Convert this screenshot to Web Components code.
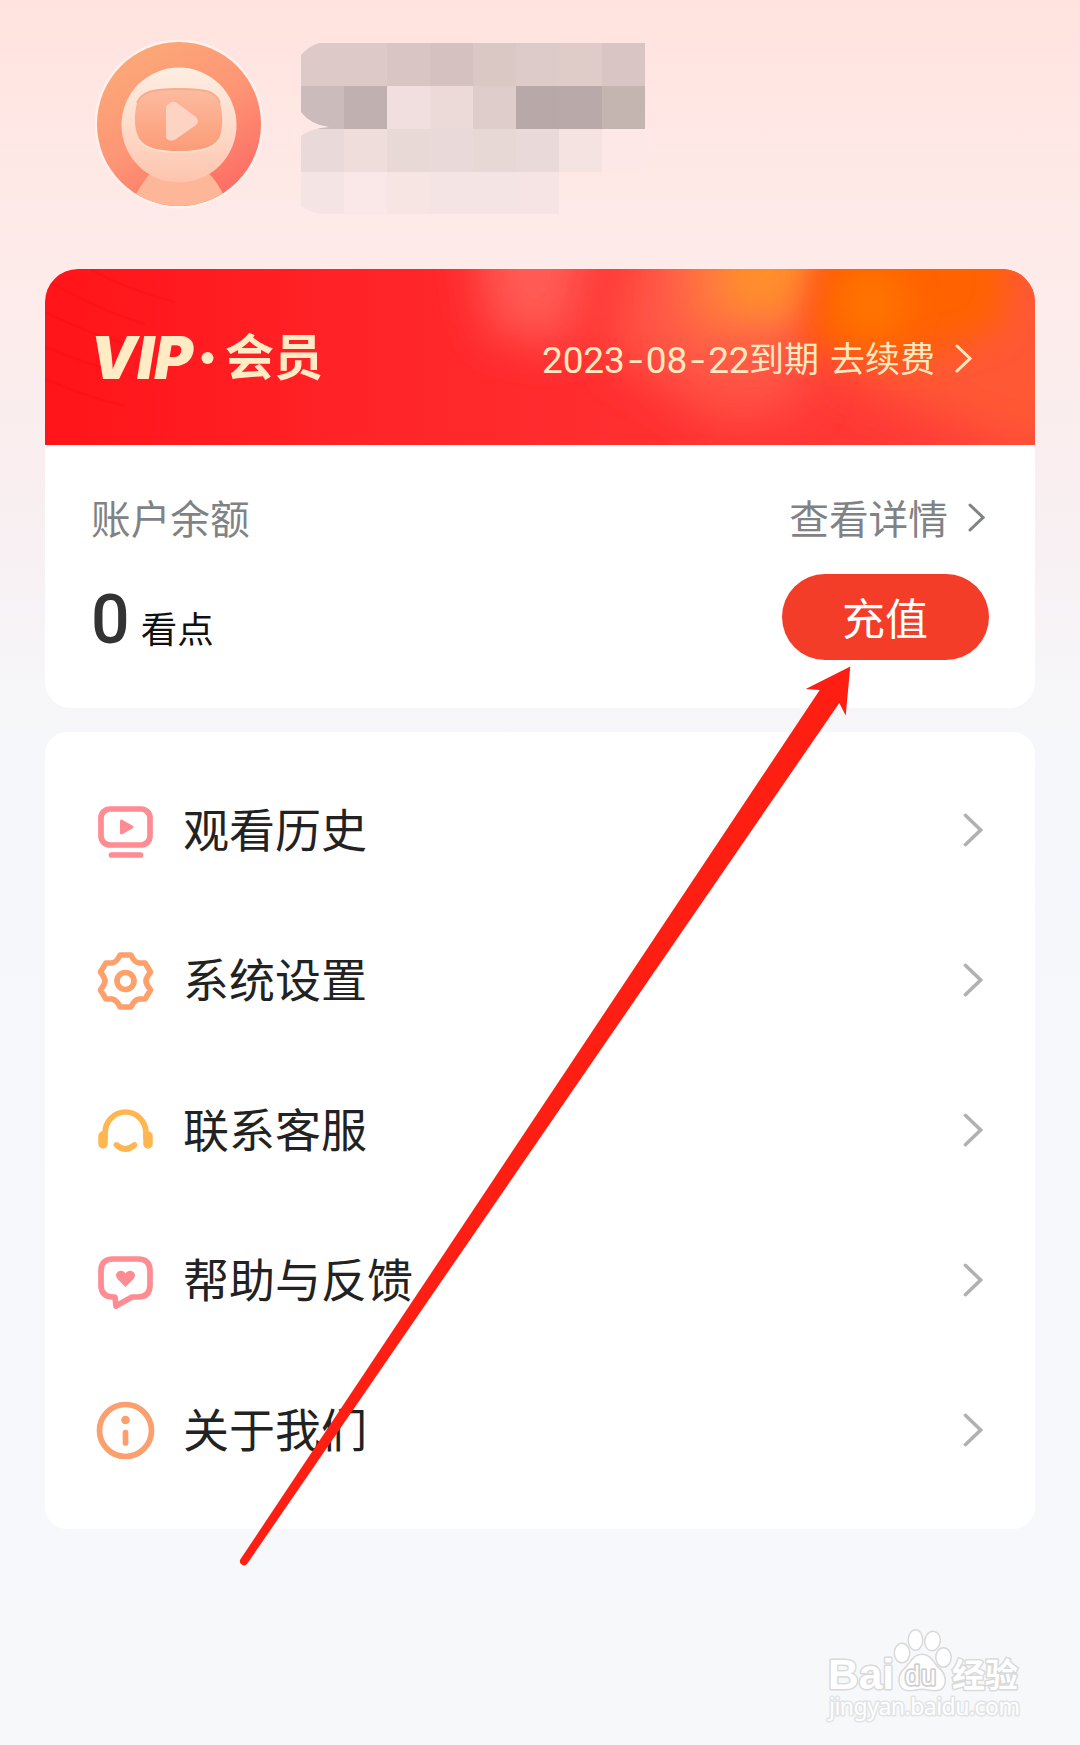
<!DOCTYPE html>
<html lang="zh-CN">
<head>
<meta charset="UTF-8">
<title>我的</title>
<style>
  body {
    margin: 0;
    font-family: Roboto, "Noto Sans CJK SC", sans-serif;
    color: #222;
  }
</style>
</head>
<body>
<account-page>
  <profile-header></profile-header>
  <account-card>
    <vip-banner date="2023-08-22" action="去续费"></vip-banner>
    <balance-panel amount="0"></balance-panel>
  </account-card>
  <menu-list>
    <menu-item icon="history">观看历史</menu-item>
    <menu-item icon="settings">系统设置</menu-item>
    <menu-item icon="service">联系客服</menu-item>
    <menu-item icon="feedback">帮助与反馈</menu-item>
    <menu-item icon="about">关于我们</menu-item>
  </menu-list>
  <pointer-arrow></pointer-arrow>
  <site-mark></site-mark>
</account-page>

<script>
class AccountPage extends HTMLElement {
  constructor() {
    super();
    this.attachShadow({ mode: 'open' });
    this.shadowRoot.innerHTML = `
    <style>
      :host {
        display: flex;
        flex-direction: column;
        position: relative;
        box-sizing: border-box;
        width: 1080px;
        height: 1745px;
        padding: 0 45px;
        overflow: hidden;
        background: linear-gradient(#ffe3df 0, #ffe6e3 90px, #fdebe9 260px, #f9eef0 480px, #f6f7fa 730px, #f7f8fa 100%);
      }
    </style>
    <slot></slot>
    `;
  }
}

class ProfileHeader extends HTMLElement {
  constructor() {
    super();
    this.attachShadow({ mode: 'open' });
    const cells = [
      '#dcc9c8', '#dcc9c8', '#d8c5c4', '#d4c1c0', '#dac8c5', '#ddcbca', '#dfccc9', '#d9c6c4',
      '#ccbbbb', '#c0b0b0', '#f1dede', '#ecdad9', '#dfcdcc', '#b8a8a8', '#b9aaa9', '#c5b5b1',
      '#ead9d9', '#eedddb', '#e8d8d6', '#ead9d9', '#e8d8d5', '#e9d9d8', '#f5e3e2', '#fde8e7',
      '#f5e4e4', '#fae7e7', '#f6e5e3', '#f4e4e3', '#f5e4e4', '#f6e4e4', 'transparent', 'transparent'
    ];
    this.shadowRoot.innerHTML = `
    <style>
      :host {
        display: flex;
        align-items: flex-start;
        padding: 39px 0 0 49px;
        box-sizing: border-box;
        height: 269px;
        gap: 37px;
      }

      .avatar {
        width: 170px;
        height: 170px;
        flex: none;
      }

      .mosaic {
        display: grid;
        grid-template-columns: repeat(8, 43px);
        grid-template-rows: 43px 43px 43px 42px;
        margin-top: 4px;
        clip-path: path('M0 12Q8 3 18 0H344V171H26Q10 171 0 163V93Q8 86 28 84Q10 82 0 69Z');
      }
    </style>
    <svg class="avatar" viewBox="0 0 170 170">
      <defs>
        <linearGradient id="disc" x1="0.3" y1="0" x2="0.85" y2="0.9">
          <stop offset="0" stop-color="#fca878"/>
          <stop offset=".5" stop-color="#fd9575"/>
          <stop offset="1" stop-color="#fe6c64"/>
        </linearGradient>
        <linearGradient id="face" x1="0" y1="0" x2="0" y2="1">
          <stop offset="0" stop-color="#fdeee2"/>
          <stop offset=".5" stop-color="#fddccb"/>
          <stop offset="1" stop-color="#fdc4ad"/>
        </linearGradient>
        <linearGradient id="screen" x1="0" y1="0" x2="0" y2="1">
          <stop offset="0" stop-color="#fcbca0"/>
          <stop offset="1" stop-color="#fc9b77"/>
        </linearGradient>
        <clipPath id="round"><circle cx="85" cy="85" r="82"/></clipPath>
      </defs>
      <circle cx="85" cy="85" r="84.500" fill="#fff1eb"/>
      <circle cx="85" cy="85" r="82" fill="url(#disc)"/>
      <path d="M58 133Q49 141 39 161V170H132V161Q123 141 113 133Z" fill="#fdb697" clip-path="url(#round)"/>
      <circle cx="85" cy="86" r="57.500" fill="url(#face)"/>
      <path d="M85 49.500C111 49.500 122 52 126 64C129 75 129 88 126 97C121 110 109 113 85 113C61 113 49 110 44 97C40 88 40 75 43 64C48 52 60 49.500 85 49.500Z" fill="url(#screen)"/>
      <path d="M43 64C48 52 60 50 85 50C111 50 122 52 126 64" fill="none" stroke="#f9ab90" stroke-width="2"/>
      <path d="M45 101Q53 113 85 113Q117 113 125 101" fill="none" stroke="#fee0cc" stroke-width="2"/>
      <path d="M75 65Q78 61 83 64L102 78Q106 82 102 86L82 100Q76 104 72 99V69Q72 66 75 65Z" fill="#fdd3c3"/>
    </svg>
    <div class="mosaic">${cells.map((color) => `<i style="background:${color}"></i>`).join('')}</div>
    `;
  }
}

class AccountCard extends HTMLElement {
  constructor() {
    super();
    this.attachShadow({ mode: 'open' });
    this.shadowRoot.innerHTML = `
    <style>
      :host {
        display: block;
        height: 439px;
        margin-bottom: 24px;
        border-radius: 33px 33px 26px 26px;
        background: #fff;
        overflow: hidden;
      }
    </style>
    <slot></slot>
    `;
  }
}

class ChevronIcon extends HTMLElement {
  constructor() {
    super();
    this.attachShadow({ mode: 'open' });
    this.shadowRoot.innerHTML = `
    <style>
      :host {
        display: block;
        flex: none;
        width: 17px;
        height: 29px;
      }

      svg {
        display: block;
        width: 100%;
        height: 100%;
      }

      path {
        fill: none;
        stroke: currentColor;
        stroke-width: 3;
        stroke-linecap: round;
      }
    </style>
    <svg viewBox="0 0 17 29"><path d="M2 2L15 14.500L2 27"/></svg>
    `;
  }
}

class VipBanner extends HTMLElement {
  constructor() {
    super();
    this.attachShadow({ mode: 'open' });
    this.shadowRoot.innerHTML = `
    <style>
      :host {
        display: flex;
        justify-content: space-between;
        align-items: center;
        position: relative;
        box-sizing: border-box;
        height: 176px;
        padding: 0 63px 0 40px;
        color: #ffe9bf;
        overflow: hidden;
      }

      .glow {
        position: absolute;
        inset: 0;
        width: 990px;
        height: 176px;
      }

      .logo {
        position: relative;
        width: 260px;
        height: 100px;
        margin-top: 2px;
        fill: #ffebc4;
      }

      .renew {
        position: relative;
        display: flex;
        align-items: center;
        font-size: 35px;
        line-height: 50px;
        margin-top: 7px;
      }

      .date {
        font-family: Roboto, sans-serif;
        font-size: 37px;
        width: 207px;
        white-space: nowrap;
        letter-spacing: -.1px;
      }

      .dash {
        display: inline-block;
        width: 21px;
        text-align: center;
        transform: scaleX(1.35);
      }

      .action {
        margin: 0 20px 0 11px;
      }

      .renew chevron-icon {
        margin-top: -5px;
      }
    </style>
    <svg class="glow" viewBox="0 0 990 176">
      <defs>
        <linearGradient id="base">
          <stop offset="0" stop-color="#ff1419"/>
          <stop offset=".35" stop-color="#ff2529"/>
          <stop offset=".6" stop-color="#ff2f30"/>
          <stop offset="1" stop-color="#ff3f3a"/>
        </linearGradient>
        <filter id="soft" x="-50%" y="-50%" width="200%" height="200%"><feGaussianBlur stdDeviation="24"/></filter>
        <filter id="edge" x="-50%" y="-50%" width="200%" height="200%"><feGaussianBlur stdDeviation="17"/></filter>
      </defs>
      <rect width="990" height="176" fill="url(#base)"/>
      <path d="M425 -90H560L530 75L445 65Z" fill="#ff5c55" filter="url(#soft)"/>
      <path d="M600 -90H810L760 135L680 155L560 80Z" fill="#ff5546" filter="url(#soft)"/>
      <path d="M790 -90H1100V190L970 180L790 105Z" fill="#ff5934" filter="url(#soft)"/>
      <path d="M635 -90H790L740 70L640 65Z" fill="#ff7a40" filter="url(#soft)"/>
      <path d="M690 -90H800L745 50L680 35Z" fill="#ff8e2a" filter="url(#edge)"/>
      <path d="M785 -90H975L955 60L860 90L760 80Z" fill="#ff6204" filter="url(#edge)"/>
      <ellipse cx="827" cy="35" rx="34" ry="36" fill="#ff7400" filter="url(#edge)"/>
      <g fill="none" stroke="#e80d16" stroke-width="2.500" opacity=".25">
        <path d="M0 10Q50 40 100 55"/>
        <path d="M0 43Q50 68 100 80"/>
        <path d="M0 78Q40 95 90 108"/>
        <path d="M0 110Q35 126 80 137"/>
        <path d="M45 0Q80 20 130 33"/>
      </g>
    </svg>
    <svg class="logo" viewBox="0 0 260 100">
      <text x="5" y="71" font-family="Inter" font-weight="900" font-style="italic" font-size="59" textLength="103" lengthAdjust="spacingAndGlyphs">VIP</text>
      <circle cx="122.500" cy="50" r="6"/>
      <text x="140" y="67" font-family="Noto Sans CJK SC" font-weight="700" font-size="49" textLength="98">会员</text>
    </svg>
    <div class="renew">
      <span class="date">${this.getAttribute('date').replaceAll('-', '<span class="dash">-</span>')}</span>
      <span>到期</span>
      <span class="action">${this.getAttribute('action')}</span>
      <chevron-icon></chevron-icon>
    </div>
    `;
  }
}

class BalancePanel extends HTMLElement {
  constructor() {
    super();
    this.attachShadow({ mode: 'open' });
    this.shadowRoot.innerHTML = `
    <style>
      :host {
        display: block;
        padding: 41px 46px 0;
      }

      .row {
        display: flex;
        justify-content: space-between;
        align-items: center;
        height: 60px;
        font-size: 39.700px;
        color: #7f8385;
      }

      .link {
        display: flex;
        align-items: center;
        gap: 20px;
        padding-right: 4px;
      }

      .link chevron-icon {
        margin-top: 2px;
      }

      .funds {
        height: 86px;
        margin-top: 28px;
        color: #111;
      }

      .amount {
        display: flex;
        align-items: baseline;
        gap: 11px;
        padding-top: 6px;
        font-size: 36.500px;
      }

      b {
        font-size: 68px;
        font-weight: 500;
        color: #333;
      }

      button {
        width: 207px;
        height: 86px;
        padding: 0 1px 2px 0;
        border: 0;
        border-radius: 43px;
        background: #f33d29;
        color: #fff;
        font: 43px "Noto Sans CJK SC", sans-serif;
      }
    </style>
    <div class="row">
      <span>账户余额</span>
      <span class="link">查看详情<chevron-icon></chevron-icon></span>
    </div>
    <div class="row funds">
      <span class="amount"><b>${this.getAttribute('amount')}</b>看点</span>
      <button>充值</button>
    </div>
    `;
  }
}

class MenuList extends HTMLElement {
  constructor() {
    super();
    this.attachShadow({ mode: 'open' });
    this.shadowRoot.innerHTML = `
    <style>
      :host {
        display: flex;
        flex-direction: column;
        box-sizing: border-box;
        height: 797px;
        padding: 23px 52px 24px 51px;
        border-radius: 22px;
        background: #fff;
      }
    </style>
    <slot></slot>
    `;
  }
}

// every icon sits in a 60x60 box, centered on the row
const icons = {
  history: `
    <g stroke="#ff8b93">
      <rect x="5" y="9" width="49" height="36" rx="9"/>
      <path d="M15.500 55H44.500"/>
    </g>
    <path d="M25.500 21L36 27L25.500 33Z" fill="#ff8b93" stroke="#ff8b93" stroke-width="3"/>`,
  settings: `
    <g stroke="#fda06c">
      <path d="M24 5H35Q38 12 43 13L49 13L54.500 22Q50 28 50 31Q50 34 54.500 40L49 49L43 49Q38 50 35 57H24Q21 50 16 49L10 49L4.500 40Q9 34 9 31Q9 28 4.500 22L10 13L16 13Q21 12 24 5Z"/>
      <circle cx="29.500" cy="31" r="8.500"/>
    </g>`,
  service: `
    <g stroke="#ffb650">
      <path d="M9 37V33A20.500 21 0 0 1 50 33V37"/>
      <path d="M20.500 45Q29.500 53 38.500 45"/>
      <path d="M7 36V44M52 36V44" stroke-width="9.500"/>
    </g>`,
  feedback: `
    <path d="M17 9H42Q54 9 54 21V35Q54 47 42 47H36L20 56L19 47H17Q5 47 5 35V21Q5 9 17 9Z" stroke="#ff8b93"/>
    <path d="M29.500 36L22 28.500Q19 24 23 22Q27 20.500 29.500 25Q32 20.500 36 22Q40 24 37 28.500Z" fill="#ff8b93" stroke="#ff8b93" stroke-width="1.500"/>`,
  about: `
    <g stroke="#fb9f6e">
      <circle cx="29.500" cy="30.500" r="26"/>
      <path d="M29.500 32.500V43"/>
    </g>
    <circle cx="29.500" cy="20" r="4.300" fill="#fb9f6e"/>`
};

class MenuItem extends HTMLElement {
  constructor() {
    super();
    this.attachShadow({ mode: 'open' });
    this.shadowRoot.innerHTML = `
    <style>
      :host {
        display: flex;
        align-items: center;
        height: 150px;
        font-size: 46px;
        color: #222;
      }

      .icon {
        width: 60px;
        height: 60px;
        flex: none;
        fill: none;
        stroke-width: 5.700px;
        stroke-linecap: round;
        stroke-linejoin: round;
      }

      .label {
        flex: 1;
        margin-left: 27px;
        padding-bottom: 7px;
      }

      chevron-icon {
        width: 20px;
        height: 34px;
        color: #b1b1b1;
      }
    </style>
    <svg class="icon" viewBox="0 0 60 60">${icons[this.getAttribute('icon')]}</svg>
    <span class="label"><slot></slot></span>
    <chevron-icon></chevron-icon>
    `;
  }
}

class PointerArrow extends HTMLElement {
  constructor() {
    super();
    this.attachShadow({ mode: 'open' });
    this.shadowRoot.innerHTML = `
    <style>
      :host {
        position: absolute;
        left: 230px;
        top: 660px;
      }

      svg {
        display: block;
        fill: #ff1e12;
      }
    </style>
    <svg width="630" height="912" viewBox="230 660 630 912">
      <path d="M850.300 666.500L805.700 689L819.700 690L240.300 1559.500A4.100 4.100 0 0 0 247 1564L839.300 703L845.700 715.500Z"/>
    </svg>
    `;
  }
}

class SiteMark extends HTMLElement {
  constructor() {
    super();
    this.attachShadow({ mode: 'open' });
    this.shadowRoot.innerHTML = `
    <style>
      :host {
        position: absolute;
        left: 820px;
        top: 1620px;
      }

      svg {
        display: block;
        fill: #fff;
        stroke: #d9d9da;
        stroke-width: 3px;
        stroke-linejoin: round;
        paint-order: stroke;
      }
    </style>
    <svg width="210" height="110" viewBox="820 1620 210 110">
      <text x="828" y="1689" font-family="Liberation Sans" font-weight="700" font-size="43" textLength="66" lengthAdjust="spacingAndGlyphs">Bai</text>
      <g>
        <ellipse cx="902" cy="1653" rx="7" ry="9"/>
        <ellipse cx="915.500" cy="1640" rx="6.500" ry="9.500"/>
        <ellipse cx="932.500" cy="1641" rx="7" ry="9" transform="rotate(10 932.500 1641)"/>
        <ellipse cx="943.500" cy="1657.500" rx="7" ry="9"/>
        <path d="M922 1655C931 1655 933 1664 939 1669C947 1676 947 1690 935 1690C930 1690 927 1688.500 922 1688.500C917 1688.500 915 1690 909 1690C898 1690 897 1676 905 1669C911 1664 913 1655 922 1655Z"/>
      </g>
      <text x="905" y="1685" font-family="Liberation Sans" font-size="27" textLength="31" style="stroke-width:3.500px;stroke:#cfcfd0">du</text>
      <text x="952" y="1687" font-family="Noto Sans CJK SC" font-weight="700" font-size="33" textLength="66">经验</text>
      <text x="829" y="1715" font-family="Noto Sans" font-size="23" textLength="191" style="stroke:#e2e3e5">jingyan.baidu.com</text>
    </svg>
    `;
  }
}

customElements.define('chevron-icon', ChevronIcon);
customElements.define('account-page', AccountPage);
customElements.define('profile-header', ProfileHeader);
customElements.define('account-card', AccountCard);
customElements.define('vip-banner', VipBanner);
customElements.define('balance-panel', BalancePanel);
customElements.define('menu-list', MenuList);
customElements.define('menu-item', MenuItem);
customElements.define('pointer-arrow', PointerArrow);
customElements.define('site-mark', SiteMark);
</script>
</body>
</html>
